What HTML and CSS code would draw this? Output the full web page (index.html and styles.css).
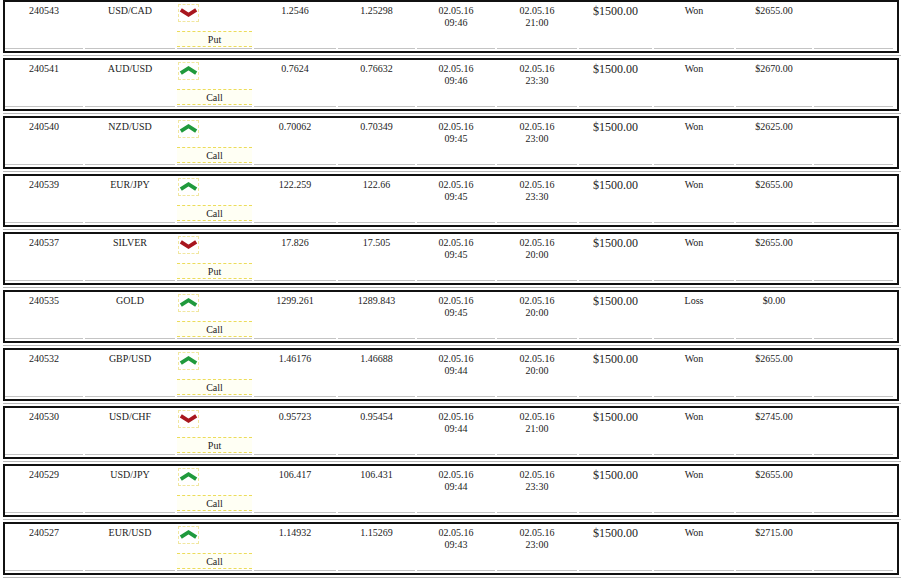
FILE: index.html
```html
<!DOCTYPE html>
<html>
<head>
<meta charset="utf-8">
<link rel="stylesheet" href="styles.css">
</head>
<body>
<div class="list">
  <div class="entry"><div class="box">
    <div class="c c1">240543</div><div class="c c2">USD/CAD</div>
    <div class="c c3"><span class="ico"><svg width="21" height="11" viewBox="0 0 21 11"><polyline class="dn" points="2,2.5 10.5,8 19,2.5"/></svg></span><span class="lbl">Put</span></div>
    <div class="c c4">1.2546</div><div class="c c5">1.25298</div><div class="c c6">02.05.16<br>09:46</div><div class="c c7">02.05.16<br>21:00</div><div class="c c8 amt">$1500.00</div><div class="c c9">Won</div><div class="c c10">$2655.00</div><div class="c c11"></div>
  </div></div>
  <div class="entry"><div class="box">
    <div class="c c1">240541</div><div class="c c2">AUD/USD</div>
    <div class="c c3"><span class="ico"><svg width="21" height="11" viewBox="0 0 21 11"><polyline class="up" points="2,8.5 10.5,3 19,8.5"/></svg></span><span class="lbl">Call</span></div>
    <div class="c c4">0.7624</div><div class="c c5">0.76632</div><div class="c c6">02.05.16<br>09:46</div><div class="c c7">02.05.16<br>23:30</div><div class="c c8 amt">$1500.00</div><div class="c c9">Won</div><div class="c c10">$2670.00</div><div class="c c11"></div>
  </div></div>
  <div class="entry"><div class="box">
    <div class="c c1">240540</div><div class="c c2">NZD/USD</div>
    <div class="c c3"><span class="ico"><svg width="21" height="11" viewBox="0 0 21 11"><polyline class="up" points="2,8.5 10.5,3 19,8.5"/></svg></span><span class="lbl">Call</span></div>
    <div class="c c4">0.70062</div><div class="c c5">0.70349</div><div class="c c6">02.05.16<br>09:45</div><div class="c c7">02.05.16<br>23:00</div><div class="c c8 amt">$1500.00</div><div class="c c9">Won</div><div class="c c10">$2625.00</div><div class="c c11"></div>
  </div></div>
  <div class="entry"><div class="box">
    <div class="c c1">240539</div><div class="c c2">EUR/JPY</div>
    <div class="c c3"><span class="ico"><svg width="21" height="11" viewBox="0 0 21 11"><polyline class="up" points="2,8.5 10.5,3 19,8.5"/></svg></span><span class="lbl">Call</span></div>
    <div class="c c4">122.259</div><div class="c c5">122.66</div><div class="c c6">02.05.16<br>09:45</div><div class="c c7">02.05.16<br>23:30</div><div class="c c8 amt">$1500.00</div><div class="c c9">Won</div><div class="c c10">$2655.00</div><div class="c c11"></div>
  </div></div>
  <div class="entry"><div class="box">
    <div class="c c1">240537</div><div class="c c2">SILVER</div>
    <div class="c c3"><span class="ico"><svg width="21" height="11" viewBox="0 0 21 11"><polyline class="dn" points="2,2.5 10.5,8 19,2.5"/></svg></span><span class="lbl">Put</span></div>
    <div class="c c4">17.826</div><div class="c c5">17.505</div><div class="c c6">02.05.16<br>09:45</div><div class="c c7">02.05.16<br>20:00</div><div class="c c8 amt">$1500.00</div><div class="c c9">Won</div><div class="c c10">$2655.00</div><div class="c c11"></div>
  </div></div>
  <div class="entry"><div class="box">
    <div class="c c1">240535</div><div class="c c2">GOLD</div>
    <div class="c c3"><span class="ico"><svg width="21" height="11" viewBox="0 0 21 11"><polyline class="up" points="2,8.5 10.5,3 19,8.5"/></svg></span><span class="lbl">Call</span></div>
    <div class="c c4">1299.261</div><div class="c c5">1289.843</div><div class="c c6">02.05.16<br>09:45</div><div class="c c7">02.05.16<br>20:00</div><div class="c c8 amt">$1500.00</div><div class="c c9">Loss</div><div class="c c10">$0.00</div><div class="c c11"></div>
  </div></div>
  <div class="entry"><div class="box">
    <div class="c c1">240532</div><div class="c c2">GBP/USD</div>
    <div class="c c3"><span class="ico"><svg width="21" height="11" viewBox="0 0 21 11"><polyline class="up" points="2,8.5 10.5,3 19,8.5"/></svg></span><span class="lbl">Call</span></div>
    <div class="c c4">1.46176</div><div class="c c5">1.46688</div><div class="c c6">02.05.16<br>09:44</div><div class="c c7">02.05.16<br>20:00</div><div class="c c8 amt">$1500.00</div><div class="c c9">Won</div><div class="c c10">$2655.00</div><div class="c c11"></div>
  </div></div>
  <div class="entry"><div class="box">
    <div class="c c1">240530</div><div class="c c2">USD/CHF</div>
    <div class="c c3"><span class="ico"><svg width="21" height="11" viewBox="0 0 21 11"><polyline class="dn" points="2,2.5 10.5,8 19,2.5"/></svg></span><span class="lbl">Put</span></div>
    <div class="c c4">0.95723</div><div class="c c5">0.95454</div><div class="c c6">02.05.16<br>09:44</div><div class="c c7">02.05.16<br>21:00</div><div class="c c8 amt">$1500.00</div><div class="c c9">Won</div><div class="c c10">$2745.00</div><div class="c c11"></div>
  </div></div>
  <div class="entry"><div class="box">
    <div class="c c1">240529</div><div class="c c2">USD/JPY</div>
    <div class="c c3"><span class="ico"><svg width="21" height="11" viewBox="0 0 21 11"><polyline class="up" points="2,8.5 10.5,3 19,8.5"/></svg></span><span class="lbl">Call</span></div>
    <div class="c c4">106.417</div><div class="c c5">106.431</div><div class="c c6">02.05.16<br>09:44</div><div class="c c7">02.05.16<br>23:30</div><div class="c c8 amt">$1500.00</div><div class="c c9">Won</div><div class="c c10">$2655.00</div><div class="c c11"></div>
  </div></div>
  <div class="entry"><div class="box">
    <div class="c c1">240527</div><div class="c c2">EUR/USD</div>
    <div class="c c3"><span class="ico"><svg width="21" height="11" viewBox="0 0 21 11"><polyline class="up" points="2,8.5 10.5,3 19,8.5"/></svg></span><span class="lbl">Call</span></div>
    <div class="c c4">1.14932</div><div class="c c5">1.15269</div><div class="c c6">02.05.16<br>09:43</div><div class="c c7">02.05.16<br>23:00</div><div class="c c8 amt">$1500.00</div><div class="c c9">Won</div><div class="c c10">$2715.00</div><div class="c c11"></div>
  </div></div>
</div>
</body>
</html>
```
FILE: styles.css
```css
html, body {
  margin: 0;
  padding: 0;
  background: #fff;
}
body {
  font-family: "Liberation Serif", "Times New Roman", serif;
  font-size: 10px;
  color: #222;
}
.list {
  padding-left: 3px;
}
.entry {
  width: 898px;
  padding-bottom: 2px;
  border-bottom: 1px solid #b8b8b8;
  margin-bottom: 2px;
}
.box {
  box-sizing: border-box;
  width: 896px;
  height: 53px;
  border: 2px solid #111;
  display: flex;
  gap: 2px;
  align-items: flex-start;
}
.c {
  box-sizing: border-box;
  height: 47px;
  border-bottom: 1px solid #c4c4c4;
  padding-top: 3px;
  line-height: 12px;
  text-align: center;
  flex: none;
}
.c1 { width: 78px; }
.c2 { width: 90px; }
.c3 { width: 75px; display: flex; flex-direction: column; align-items: flex-start; padding-top: 2px; }
.c4 { width: 82px; }
.c5 { width: 77px; }
.c6 { width: 78px; }
.c7 { width: 80px; }
.c8 { width: 73px; }
.c9 { width: 80px; }
.c10 { width: 76px; }
.c11 { width: 79px; }
.amt {
  font-size: 12px;
  padding-top: 3px;
}
.ico {
  box-sizing: border-box;
  width: 21px;
  height: 18px;
  margin-left: 1px;
  border: 1px dashed #f1e7a0;
  display: flex;
  align-items: center;
  justify-content: center;
}
.ico svg {
  display: block;
  margin-top: -2px;
}
.dn {
  fill: none;
  stroke: #a8161e;
  stroke-width: 4.2;
  stroke-linejoin: miter;
}
.up {
  fill: none;
  stroke: #1f9a3c;
  stroke-width: 4.2;
  stroke-linejoin: miter;
}
.lbl {
  box-sizing: border-box;
  width: 75px;
  height: 16px;
  margin-top: 9px;
  border-top: 1px dashed #ecdc5a;
  border-bottom: 1px dashed #ecdc5a;
  background: #fffff4;
  line-height: 15px;
  text-align: center;
}
```
